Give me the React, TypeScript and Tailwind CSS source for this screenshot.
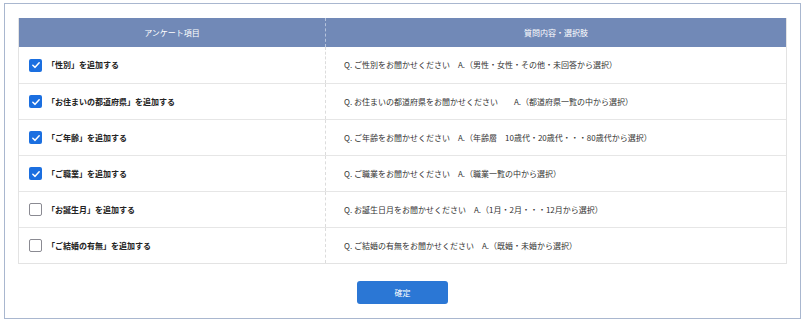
import React from 'react';

const rows = [
  { label: '「性別」を追加する', q: 'Q. ご性別をお聞かせください　A.（男性・女性・その他・未回答から選択）', checked: true },
  { label: '「お住まいの都道府県」を追加する', q: 'Q. お住まいの都道府県をお聞かせください　　A.（都道府県一覧の中から選択）', checked: true },
  { label: '「ご年齢」を追加する', q: 'Q. ご年齢をお聞かせください　A.（年齢層　10歳代・20歳代・・・80歳代から選択）', checked: true },
  { label: '「ご職業」を追加する', q: 'Q. ご職業をお聞かせください　A.（職業一覧の中から選択）', checked: true },
  { label: '「お誕生月」を追加する', q: 'Q. お誕生日月をお聞かせください　A.（1月・2月・・・12月から選択）', checked: false },
  { label: '「ご結婚の有無」を追加する', q: 'Q. ご結婚の有無をお聞かせください　A.（既婚・未婚から選択）', checked: false },
];

const Checkbox: React.FC<{ checked: boolean }> = ({ checked }) =>
  checked ? (
    <span className="flex h-[13px] w-[13px] items-center justify-center rounded-[2px] bg-[#1b6fe0]">
      <svg viewBox="0 0 12 12" className="h-[10px] w-[10px]">
        <path d="M2.2 6.3 L4.9 8.8 L9.8 3.4" fill="none" stroke="white" strokeWidth="1.8" strokeLinecap="round" strokeLinejoin="round" />
      </svg>
    </span>
  ) : (
    <span className="h-[13px] w-[13px] rounded-[2px] border-[1.5px] border-[#8a8a92] bg-white" />
  );

export default function App() {
  return (
    <div className="bg-white w-[807px] h-[326px] pt-[3px] pl-[4px] font-['Noto_Sans_CJK_JP','Noto_Sans',sans-serif]">
      <div className="w-[797px] h-[316px] border border-[#a9b7cf] pt-[14px] px-[13px]">
        <div className="border border-[#e3e3e3] border-t-0">
          <div className="grid grid-cols-[307px_1fr] h-[29px] bg-[#7189b7] text-white text-[8px]">
            <div className="flex items-center justify-center border-r border-dashed border-[#b7c4dc]">アンケート項目</div>
            <div className="flex items-center justify-center">質問内容・選択肢</div>
          </div>
          {rows.map((r, i) => (
            <div key={i} className={`grid grid-cols-[307px_1fr] h-[36px] ${i > 0 ? 'border-t border-[#e6e6e6]' : ''}`}>
              <div className="flex items-center pl-[10px] gap-[5px] border-r border-dashed border-[#dcdcdc]">
                <Checkbox checked={r.checked} />
                <span className="text-[8px] font-bold text-[#222]">{r.label}</span>
              </div>
              <div className="flex items-center pl-[18px] text-[8px] text-[#333] whitespace-pre">{r.q}</div>
            </div>
          ))}
        </div>
        <div className="flex justify-center mt-[17px]">
          <button className="w-[91px] h-[23px] rounded-[3px] bg-[#2b77d5] text-white text-[8px]">確定</button>
        </div>
      </div>
    </div>
  );
}
